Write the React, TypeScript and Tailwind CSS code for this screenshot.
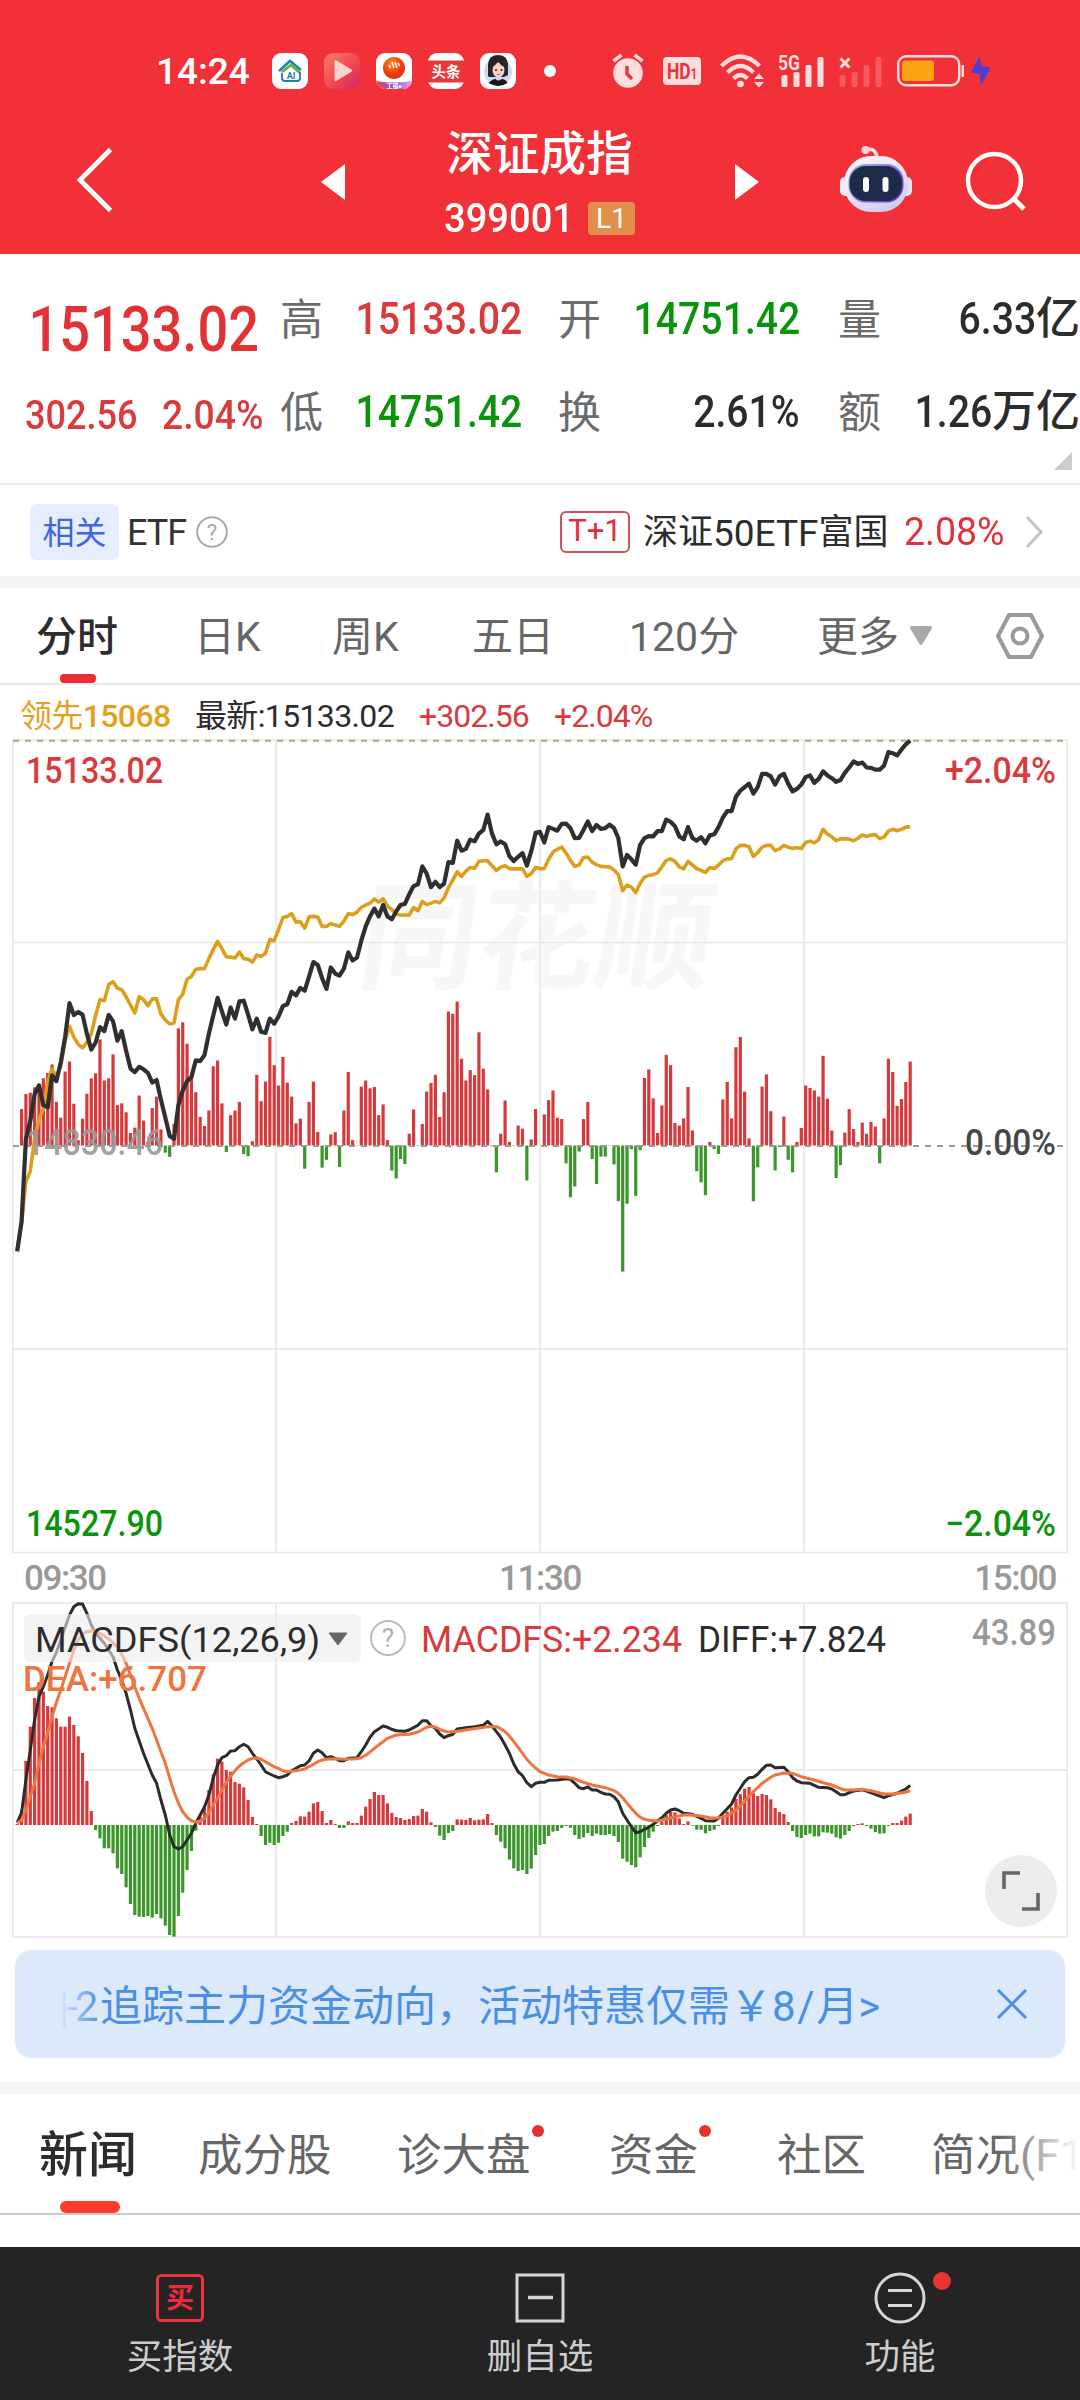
import type { ReactNode } from 'react'

type Point = [number, number]

// One entry per trading minute, 09:30 to 14:24
const priceLine = [
  1460, 1375, 1145, 1095, 1020, 995, 1050, 1057, 967, 983, 930, 860, 765, 798, 790, 797, 850, 895, 875, 832,
  843, 798, 815, 870, 843, 898, 948, 958, 943, 950, 960, 987, 980, 1035, 1085, 1137, 1145, 1050, 1010, 983,
  972, 925, 927, 910, 850, 800, 750, 788, 825, 777, 808, 760, 758, 797, 838, 808, 845, 848, 808, 822,
  802, 773, 768, 733, 743, 722, 730, 690, 650, 658, 695, 725, 665, 682, 688, 668, 623, 645, 637, 590,
  550, 522, 500, 522, 490, 522, 530, 508, 490, 487, 460, 437, 432, 382, 402, 440, 425, 440, 430, 370,
  372, 310, 338, 333, 307, 312, 290, 280, 237, 290, 320, 312, 320, 353, 367, 355, 345, 380, 340, 288,
  285, 315, 272, 277, 282, 263, 262, 275, 303, 302, 280, 256, 283, 266, 277, 275, 265, 275, 303, 382,
  350, 362, 377, 322, 303, 297, 298, 283, 283, 251, 257, 270, 298, 306, 272, 302, 310, 300, 317, 295,
  292, 272, 245, 227, 227, 187, 170, 160, 150, 178, 160, 123, 123, 130, 153, 130, 123, 150, 172, 165,
  153, 132, 127, 148, 137, 116, 127, 135, 145, 140, 120, 105, 88, 95, 91, 105, 106, 111, 111, 100,
  62, 65, 71, 55, 40, 30,
]

const leadLine = [
  1455, 1380, 1265, 1235, 1145, 1090, 1060, 985, 950, 970, 940, 870, 830, 860, 880, 890, 875, 850, 800, 755,
  758, 713, 705, 723, 727, 747, 770, 792, 747, 755, 772, 753, 753, 795, 812, 823, 820, 755, 740, 698,
  690, 670, 668, 668, 640, 615, 592, 612, 635, 636, 638, 622, 640, 642, 650, 630, 634, 625, 587, 590,
  558, 525, 522, 514, 538, 537, 555, 523, 522, 524, 550, 550, 542, 546, 550, 535, 514, 517, 510, 497,
  490, 485, 473, 482, 473, 493, 503, 516, 518, 518, 518, 497, 506, 480, 489, 485, 480, 484, 470, 442,
  420, 397, 410, 395, 385, 387, 368, 366, 366, 380, 393, 384, 380, 388, 389, 389, 389, 410, 402, 385,
  388, 388, 362, 342, 334, 328, 345, 365, 382, 378, 357, 356, 370, 377, 382, 383, 384, 392, 405, 450,
  434, 440, 455, 430, 412, 407, 405, 400, 383, 365, 361, 368, 383, 389, 368, 378, 388, 393, 399, 385,
  388, 378, 366, 361, 360, 333, 323, 323, 327, 354, 343, 328, 323, 323, 338, 333, 323, 328, 332, 329,
  332, 315, 311, 316, 307, 278, 291, 299, 310, 305, 304, 306, 310, 303, 294, 298, 294, 293, 304, 300,
  283, 278, 282, 278, 272, 271,
]

const flowBars = [
  0, 102, 144, 148, 163, 170, 188, 203, 227, 122, 78, 207, 235, 117, 15, 75, 145, 188, 202, 297,
  182, 188, 255, 113, 118, 93, 35, 50, 140, 70, 10, 105, 137, 45, -20, -32, 60, 328, 345, 285,
  195, 149, 80, 55, 98, 222, 238, 118, -18, 85, 98, 122, -24, -30, 12, 198, 124, 179, 304, 225,
  168, 248, 176, 137, 62, 75, -65, 122, 179, 38, -62, -40, 31, 37, -60, 98, 206, 15, -1, 165,
  182, 160, 164, 85, 115, 15, -70, -92, -38, -52, 33, 101, -1, 60, 151, 175, 198, 80, 149, 375,
  369, 403, 243, 182, 211, 197, 317, 215, 157, -2, -75, 33, 126, 10, -1, 56, 47, -98, 17, 102,
  0, 87, 127, 154, 78, 74, -50, -145, -115, -17, 74, 122, -38, -108, -31, -31, -1, -53, -156, -353,
  -163, -10, -141, -13, 189, 213, 132, 35, 112, 254, 225, 63, 56, 76, 164, 42, -72, -103, -139, 10,
  -10, -24, 129, 178, 76, 275, 304, 151, 20, -156, -61, 165, 199, 96, -70, -4, 81, -40, -75, 10,
  49, 168, 161, 154, 137, 251, 131, 42, -91, -55, 36, 102, 46, 10, 64, 33, 66, 53, -50, 76,
  243, 206, 111, 130, 178, 235,
]

const macdBars = [
  3, 45, 192, 295, 381, 428, 400, 357, 353, 320, 295, 295, 325, 300, 266, 216, 132, 42, -15, -40,
  -70, -70, -85, -130, -147, -187, -237, -270, -275, -276, -273, -278, -267, -280, -302, -330, -335, -273, -203, -135,
  -78, -17, 25, 55, 105, 152, 199, 190, 165, 160, 129, 124, 113, 75, 24, 3, -33, -60, -53, -60,
  -53, -33, -20, 6, 12, 26, 25, 40, 65, 69, 42, 6, 15, 3, -9, -9, 11, 6, 6, 28,
  55, 78, 99, 90, 90, 65, 36, 24, 21, 15, 18, 27, 28, 48, 40, 8, -6, -32, -45, -24,
  -18, 17, 16, 15, 21, 14, 16, 17, 33, 6, -30, -50, -70, -104, -130, -138, -135, -147, -131, -90,
  -60, -57, -33, -20, -18, -9, -3, -8, -30, -42, -37, -24, -33, -26, -30, -30, -27, -33, -51, -101,
  -110, -120, -127, -97, -66, -39, -20, -3, 10, 30, 40, 38, 20, 3, 11, -2, -14, -14, -25, -18,
  -14, -3, 27, 40, 53, 78, 93, 109, 114, 95, 87, 93, 90, 77, 51, 39, 33, 9, -18, -36,
  -39, -30, -26, -34, -34, -22, -23, -26, -37, -41, -30, -18, -3, 3, 5, -3, -11, -21, -26, -25,
  -3, 6, 6, 13, 25, 34,
]

const diffLine: Point[] = [
  [0, 998], [1, 968], [2, 870], [3, 780], [4, 690], [5, 620], [6, 590], [7, 555], [8, 515], [9, 487], [10, 450],
  [11, 412], [12, 375], [13, 350], [14, 341], [15, 342], [16, 370], [17, 405], [18, 430], [20, 460], [22, 500],
  [23, 540], [24, 570], [25, 610], [26, 660], [27, 715], [29, 790], [31, 855], [32, 880], [33, 930], [34, 975],
  [35, 1035], [36, 1070], [37, 1077], [38, 1070], [39, 1050], [40, 1030], [41, 1000], [42, 975], [43, 950],
  [44, 915], [45, 865], [46, 825], [47, 803], [48, 797], [49, 783], [50, 782], [51, 770], [52, 763], [53, 770],
  [54, 790], [55, 807], [56, 825], [57, 845], [58, 852], [59, 858], [60, 863], [61, 860], [62, 855], [63, 842],
  [64, 835], [65, 827], [66, 825], [67, 812], [68, 790], [69, 780], [70, 788], [71, 803], [72, 800], [73, 805],
  [74, 812], [75, 812], [76, 805], [78, 803], [79, 785], [80, 765], [81, 742], [82, 725], [83, 717], [84, 708],
  [85, 712], [86, 718], [87, 722], [89, 724], [90, 720], [91, 713], [92, 706], [93, 692], [94, 692], [95, 707],
  [96, 715], [97, 732], [98, 743], [99, 737], [100, 733], [101, 717], [103, 713], [105, 710], [107, 706],
  [108, 694], [109, 708], [110, 725], [111, 742], [112, 765], [113, 790], [114, 822], [115, 845], [116, 857],
  [117, 878], [118, 890], [119, 880], [120, 877], [121, 877], [122, 871], [124, 870], [126, 866], [127, 868],
  [128, 880], [129, 893], [130, 896], [131, 891], [132, 900], [133, 900], [134, 907], [135, 912], [136, 913],
  [137, 920], [138, 935], [139, 970], [140, 990], [141, 1010], [142, 1028], [143, 1025], [144, 1018],
  [145, 1012], [146, 1003], [147, 993], [148, 983], [149, 970], [150, 960], [151, 957], [152, 962], [153, 970],
  [155, 973], [157, 985], [158, 992], [160, 993], [161, 985], [162, 970], [164, 942], [165, 915], [166, 895],
  [167, 875], [168, 863], [169, 862], [170, 853], [171, 838], [172, 826], [173, 825], [174, 833], [176, 832],
  [177, 845], [178, 863], [179, 873], [180, 878], [182, 880], [184, 892], [186, 893], [187, 897], [188, 905],
  [189, 914], [190, 914], [191, 908], [192, 903], [194, 899], [195, 903], [197, 913], [199, 923], [200, 917],
  [202, 910], [203, 903], [204, 897], [205, 886],
]

const deaLine: Point[] = [
  [0, 1000], [1, 990], [2, 960], [3, 920], [4, 880], [5, 820], [6, 770], [7, 728], [8, 680], [9, 637], [10, 600],
  [11, 560], [12, 520], [13, 480], [14, 450], [15, 432], [16, 425], [17, 423], [18, 424], [19, 430], [20, 438],
  [21, 447], [22, 458], [23, 472], [24, 492], [25, 520], [26, 555], [27, 590], [28, 625], [29, 655], [30, 685],
  [31, 715], [32, 750], [33, 785], [34, 820], [35, 865], [36, 905], [37, 940], [38, 965], [39, 982], [40, 992],
  [41, 996], [42, 993], [43, 985], [44, 967], [45, 945], [46, 925], [47, 900], [48, 877], [49, 858], [50, 842],
  [51, 828], [52, 818], [53, 810], [54, 805], [55, 804], [56, 808], [57, 815], [59, 830], [61, 842], [62, 845],
  [63, 844], [65, 840], [66, 837], [67, 830], [69, 815], [70, 810], [71, 808], [73, 806], [75, 808], [78, 806],
  [79, 803], [80, 796], [82, 775], [84, 755], [85, 745], [87, 735], [90, 733], [92, 726], [94, 712], [95, 709],
  [96, 711], [97, 718], [98, 723], [99, 726], [101, 724], [104, 718], [106, 714], [108, 710], [110, 710],
  [111, 716], [112, 725], [113, 738], [114, 755], [115, 772], [116, 790], [117, 808], [118, 822], [119, 834],
  [120, 845], [122, 855], [124, 860], [126, 861], [128, 867], [130, 877], [132, 885], [135, 893], [137, 902],
  [138, 910], [139, 923], [140, 940], [141, 955], [142, 970], [143, 981], [144, 988], [145, 991], [147, 993],
  [149, 988], [151, 980], [153, 975], [154, 974], [157, 978], [159, 983], [161, 984], [163, 978], [164, 970],
  [165, 960], [166, 947], [167, 933], [169, 905], [171, 880], [173, 862], [174, 855], [176, 849], [178, 850],
  [180, 860], [183, 870], [185, 878], [187, 885], [189, 896], [190, 900], [192, 900], [194, 898], [196, 902],
  [199, 912], [201, 912], [204, 907], [205, 902],
]

const minuteX = (i: number) => 17.2 + i * 4.356
const priceY = (v: number) => v / 2.8
const macdY = (v: number) => v / 3 - 112

const minuteLine = (values: number[]) =>
  values.map((v, i) => `${minuteX(i).toFixed(1)},${priceY(v).toFixed(1)}`).join(' ')
const macdLine = (points: Point[]) =>
  points.map(([i, v]) => `${minuteX(i).toFixed(1)},${macdY(v).toFixed(1)}`).join(' ')

const RED = '#d5393c'
const GREEN = '#3a9729'

function Bars({ values, base, unit }: { values: number[]; base: number; unit: number }) {
  return (
    <g>
      {values.map((v, i) => {
        const h = Math.abs(v) / unit
        return (
          <rect
            key={i}
            x={minuteX(i) - 1.6}
            y={v > 0 ? base - h : base}
            width={3.2}
            height={h}
            fill={v > 0 ? RED : GREEN}
          />
        )
      })}
    </g>
  )
}

function Label({ x, y, w, size = 36, fill, end, light, children }: {
  x: number
  y: number
  w: number
  size?: number
  fill: string
  end?: boolean
  light?: boolean
  children: string
}) {
  return (
    <text
      x={end ? x - w : x}
      y={y}
      fontSize={size}
      textLength={w}
      lengthAdjust="spacingAndGlyphs"
      fill={fill}
      className={light ? 'font-normal' : 'font-medium'}
    >
      {children}
    </text>
  )
}

function StatusBar() {
  return (
    <div className="flex h-[142px] items-center pl-[156px]">
      <span className="w-[116px] text-[37px] leading-none font-medium">14:24</span>
      <div className="flex gap-4">
        <svg width="36" height="36" viewBox="0 0 36 36">
          <rect width="36" height="36" rx="9" fill="#fff" />
          <path d="M7 18 18 8l11 9" fill="none" stroke="#1f7fc4" strokeWidth="2.6" />
          <path d="M10 19l9-7 9 8" fill="none" stroke="#63b32e" strokeWidth="2.6" />
          <path d="M10 20v5q0 3 3 3h12q3 0 3-3v-6" fill="none" stroke="#1d7bb8" strokeWidth="1.8" />
          <text x="19" y="26" fontSize="9" fontWeight="700" textAnchor="middle" fill="#1d7bb8">AI</text>
        </svg>
        <svg width="36" height="36" viewBox="0 0 36 36">
          <defs>
            <linearGradient id="play" x1="0" y1="0" x2="1" y2="1">
              <stop offset="0" stopColor="#fb7f63" />
              <stop offset="0.6" stopColor="#ee4350" />
              <stop offset="1" stopColor="#cf2a6b" />
            </linearGradient>
          </defs>
          <rect width="36" height="36" rx="9" fill="url(#play)" />
          <path d="M10.500 8.500q0-2 2-1l15 9q1.500 1 0 2.200l-15 9q-2 1-2-1z" fill="#ffd3cd" />
        </svg>
        <svg width="36" height="36" viewBox="0 0 36 36">
          <defs>
            <linearGradient id="ribbon">
              <stop offset="0" stopColor="#f4453c" />
              <stop offset="0.55" stopColor="#7b5cf0" />
              <stop offset="1" stopColor="#f2a0d8" />
            </linearGradient>
            <radialGradient id="ball" cx="0.4" cy="0.3">
              <stop offset="0" stopColor="#ff8a1f" />
              <stop offset="1" stopColor="#e8380d" />
            </radialGradient>
            <clipPath id="ballClip"><rect width="36" height="36" rx="9" /></clipPath>
          </defs>
          <g clipPath="url(#ballClip)">
            <rect width="36" height="36" fill="#fff" />
            <circle cx="18" cy="15" r="11" fill="url(#ball)" />
            <path d="M13 12l1.500 3M16 9l2 6M19 9l2 6M22 10l1.500 3" stroke="#fff" strokeWidth="1.400" />
            <path d="M0 28q18 3 36 0v8H0z" fill="url(#ribbon)" />
            <text x="18" y="34.500" fontSize="6" fontWeight="700" textAnchor="middle" fill="#fff">工银e</text>
          </g>
        </svg>
        <svg width="36" height="36" viewBox="0 0 36 36">
          <rect width="36" height="36" rx="9" fill="#fff" />
          <rect y="7.500" width="36" height="22" fill="#e9373c" />
          <text x="18" y="24" fontSize="14.500" fontWeight="700" textAnchor="middle" fill="#fff">头条</text>
        </svg>
        <svg width="36" height="36" viewBox="0 0 36 36">
          <rect width="36" height="36" rx="9" fill="#fff" />
          <circle cx="18" cy="18.500" r="14" fill="#c9dcf3" />
          <path d="M8 23V11Q9 2 18 2t10 9v11l-4 2H9z" fill="#2b2324" />
          <ellipse cx="18.500" cy="17" rx="6" ry="7.500" fill="#f6d3c3" />
          <path d="M12 14q5-2 6-7 2 6 7 7V8l-6-4-6 3z" fill="#2b2324" />
          <circle cx="16" cy="17" r="1" fill="#2b2324" />
          <circle cx="21.500" cy="17" r="1" fill="#2b2324" />
          <path d="M17 21.500h3" stroke="#d55" strokeWidth="1" />
          <path d="M8.500 30q4-4 7-4 3 3 6 0 4 0 6 4-9 6-19 0z" fill="#15151a" />
        </svg>
      </div>
      <span className="ml-7 h-3 w-3 rounded-full bg-white" />
      <svg className="ml-14" width="32" height="36" viewBox="0 0 32 36">
        <circle cx="16" cy="20" r="14.800" fill="#ffdcdd" />
        <path d="M1.500 8l8-6M30.500 8l-8-6" stroke="#ffdcdd" strokeWidth="3.500" />
        <path d="M15 13v8l5 5" fill="none" stroke="#e9383f" strokeWidth="3.500" />
      </svg>
      <svg className="ml-[19px]" width="38" height="30" viewBox="0 0 38 30">
        <rect y="1" width="38" height="28" rx="4" fill="#ffdcdd" />
        <text x="4" y="22.500" fontSize="22" fontWeight="700" textLength="30" lengthAdjust="spacingAndGlyphs" fill="#e3363c">
          HD<tspan fontSize="14">1</tspan>
        </text>
      </svg>
      <svg className="ml-[19px]" width="46" height="36" viewBox="0 0 46 36">
        <g fill="none" stroke="#ffdcdd" strokeWidth="4.200">
          <path d="M1.500 13q19-19 38 0" />
          <path d="M7.500 19.500q13-13 26 0" />
          <path d="M13.500 25.500q7-7 14 0" />
        </g>
        <circle cx="20.500" cy="31" r="3.300" fill="#ffdcdd" />
        <path d="M34 26l5-5.500 5 5.500zM34 29h10l-5 5.500z" fill="#ffdcdd" />
      </svg>
      <svg className="ml-3" width="48" height="36" viewBox="0 0 48 36">
        <text x="0" y="17" fontSize="20.500" fontWeight="700" textLength="22" lengthAdjust="spacingAndGlyphs" fill="#ffdcdd">5G</text>
        <g fill="#ffdcdd">
          <rect x="3.500" y="22" width="6" height="12" rx="1.500" />
          <rect x="15.500" y="19" width="6" height="15" rx="1.500" />
          <rect x="27.500" y="12" width="6" height="22" rx="1.500" />
          <rect x="39.500" y="4" width="6" height="30" rx="1.500" />
        </g>
      </svg>
      <svg className="ml-[13px]" width="46" height="36" viewBox="0 0 46 36">
        <path d="M1.500 5.500l9 9M10.500 5.500l-9 9" stroke="#ffdcdd" strokeWidth="3" />
        <g fill="#f6595f">
          <rect x="0.500" y="22" width="6" height="12" rx="2" />
          <rect x="12.500" y="19" width="6" height="15" rx="2" />
          <rect x="24.500" y="12" width="6" height="22" rx="2" />
          <rect x="36.500" y="4" width="6" height="30" rx="2" />
        </g>
      </svg>
      <svg className="ml-3" width="68" height="32" viewBox="0 0 68 32">
        <rect x="1.200" y="1.200" width="61" height="29" rx="8" fill="none" stroke="#ffdcdd" strokeWidth="2.400" />
        <rect x="5" y="5.500" width="32" height="20.500" rx="3.500" fill="#fca514" />
        <rect x="64.500" y="10" width="2.500" height="12" rx="1" fill="#ffdcdd" />
      </svg>
      <svg className="ml-1.5" width="20" height="32" viewBox="0 0 20 32">
        <path d="M8.500 1 0 17.500l8.500 1.500 1.500 11.500L19.500 12.500 10.500 11z" fill="#4a3fd0" />
      </svg>
    </div>
  )
}

function NavBar() {
  return (
    <div className="flex h-[112px] pl-[76px]">
      <svg className="mt-1" width="38" height="70" viewBox="0 0 38 70">
        <path d="M34.500 3.500 4 34 34.500 64.500" fill="none" stroke="#fff" strokeWidth="4.800" />
      </svg>
      <svg className="mt-[22px] ml-[207px]" width="24" height="36" viewBox="0 0 24 36">
        <path d="M24 0v36L0 18z" fill="#fff" />
      </svg>
      <div className="ml-[99px] w-[191px] -mt-[13px] whitespace-nowrap">
        <div className="text-center text-[46.5px] leading-[50px] font-medium">深证成指</div>
        <div className="mt-[23px] flex h-[33px] items-center">
          <span className="w-[144px] text-[41px] leading-none font-medium"><span className="inline-block origin-left scale-x-[0.93]">399001</span></span>
          <span className="flex h-[33px] w-[47px] items-center justify-center rounded-[4px] bg-[#e0904b] text-[28px]">L1</span>
        </div>
      </div>
      <svg className="mt-[22px] ml-[100px]" width="24" height="36" viewBox="0 0 24 36">
        <path d="M0 0v36l24-18z" fill="#fff" />
      </svg>
      <svg className="mt-[3px] ml-[81px]" width="72" height="68" viewBox="0 0 72 68">
        <defs>
          <linearGradient id="shell" x1="0" y1="0" x2="0.600" y2="1">
            <stop offset="0" stopColor="#fdf8fb" />
            <stop offset="0.600" stopColor="#e9e2f8" />
            <stop offset="1" stopColor="#cfcdf2" />
          </linearGradient>
          <linearGradient id="visor" x1="0" y1="0" x2="1" y2="0.800">
            <stop offset="0" stopColor="#8cc6d6" />
            <stop offset="0.600" stopColor="#8f6be6" />
            <stop offset="1" stopColor="#5a35b8" />
          </linearGradient>
        </defs>
        <path d="M25 5q11-3 12 8" fill="none" stroke="#f3dfe8" strokeWidth="3.500" />
        <circle cx="25.500" cy="5" r="4" fill="#f6d5dd" />
        <rect x="0" y="32" width="12" height="19" rx="5" fill="#f1ebf8" />
        <rect x="60" y="32" width="12" height="19" rx="5" fill="#e6e0f6" />
        <rect x="4" y="11" width="64" height="56" rx="27" fill="url(#shell)" />
        <rect x="8.500" y="19" width="55" height="38.500" rx="17" fill="url(#visor)" />
        <rect x="9.500" y="21" width="52.500" height="35" rx="16" fill="#1d2a49" />
        <rect x="23" y="32" width="6" height="15" rx="3" fill="#fff" />
        <rect x="42.500" y="32" width="6" height="15" rx="3" fill="#fff" />
      </svg>
      <svg className="mt-[9px] ml-[53px]" width="62" height="62" viewBox="0 0 62 62">
        <circle cx="29.500" cy="29.500" r="26.500" fill="none" stroke="#fff" strokeWidth="4.500" />
        <path d="M47.500 46.500l11.500 11.500" stroke="#fff" strokeWidth="5" />
      </svg>
    </div>
  )
}

function Quote({ label, children, color }: { label: string; children: ReactNode; color: string }) {
  return (
    <div className="flex items-center justify-between whitespace-nowrap">
      <span className="mt-[3px] text-[43px] text-[#6b6b6b]">{label}</span>
      <span className={`flex items-center text-[44px] font-medium ${color}`}>{children}</span>
    </div>
  )
}

const num = 'inline-block origin-right scale-x-[0.89]'

function QuotePanel() {
  return (
    <section className="relative h-[231px] border-b-2 border-[#ececec] pt-[18px]">
      <div className="grid h-[93px] grid-cols-[280px_242px_36px_242px_38px_242px] items-center leading-none">
        <span className="mt-[21px] origin-left scale-x-[0.86] pl-[33px] text-[63px] font-medium text-[#e23236]">15133.02</span>
        <Quote label="高" color="text-[#d93a3d]"><span className={num}>15133.02</span></Quote>
        <span />
        <Quote label="开" color="text-[#0b930d]"><span className={num}>14751.42</span></Quote>
        <span />
        <Quote label="量" color="text-[#2c2c2c]"><span className={num}>6.33</span><span>亿</span></Quote>
      </div>
      <div className="grid h-[93px] grid-cols-[280px_242px_36px_242px_38px_242px] items-center leading-none">
        <div className="mt-[7px] flex pl-[25px] text-[41px] font-medium text-[#d93a3d]">
          <span className="w-[137px] origin-left scale-x-[0.88]">302.56</span>
          <span className="origin-left scale-x-[0.91]">2.04%</span>
        </div>
        <Quote label="低" color="text-[#0b930d]"><span className={num}>14751.42</span></Quote>
        <span />
        <Quote label="换" color="text-[#2c2c2c]"><span className={num}>2.61%</span></Quote>
        <span />
        <Quote label="额" color="text-[#2c2c2c]"><span className={num}>1.26</span><span>万亿</span></Quote>
      </div>
      <svg className="absolute right-[8px] bottom-[13px]" width="18" height="18">
        <path d="M18 0v18H0z" fill="#ccc" />
      </svg>
    </section>
  )
}

function RelatedRow() {
  return (
    <section className="flex h-[91px] items-center pt-[2px] pl-[30px] whitespace-nowrap">
      <span className="flex h-14 w-[89px] items-center justify-center rounded-md bg-[#e6edfc] pt-0.5 text-[32px] text-[#3e66dd]">相关</span>
      <span className="mt-0.5 ml-2 w-[69px] text-[36px] tracking-[-0.03em] text-[#333]">ETF</span>
      <svg width="32" height="32" viewBox="0 0 32 32">
        <circle cx="16" cy="16" r="14.800" fill="none" stroke="#aaa" strokeWidth="2" />
        <text x="16" y="24" fontSize="22" textAnchor="middle" fill="#aaa">?</text>
      </svg>
      <span className="ml-[332px] flex h-[42px] w-[70px] items-center justify-center rounded-md border-2 border-[#d2505b] text-[31px] text-[#e0303d]">T+1</span>
      <span className="mt-1 ml-[13px] flex w-[261px] items-center text-[35px] text-[#2c2c2c]">
        深证<span className="text-[37px]">50ETF</span>富国
      </span>
      <span className="mt-0.5 w-[121px] origin-left scale-x-[0.96] text-[39px] text-[#e0303d]">2.08%</span>
      <svg width="19" height="34" viewBox="0 0 19 34">
        <path d="M2 2l14 15L2 32" fill="none" stroke="#c4c4c4" strokeWidth="3" />
      </svg>
    </section>
  )
}

function PeriodTabs() {
  return (
    <nav className="relative flex h-[97px] items-center border-b-2 border-[#e8e8e8] pl-[36px] text-[41px] whitespace-nowrap text-[#666]">
      <span className="mt-1 w-[158px] font-medium text-[#2c2c2c]">分时</span>
      <span className="mt-1 w-[138px]">日K</span>
      <span className="mt-1 w-[140px]">周K</span>
      <span className="mt-1 w-[157px]">五日</span>
      <span className="mt-1 w-[188px]">120分</span>
      <span className="mt-1 w-[92px]">更多</span>
      <svg width="24" height="20" viewBox="0 0 24 20">
        <path d="M3 0h18q3 0 1.500 3l-9 15q-1.500 2-3 0l-9-15Q0 0 3 0z" fill="#a8a8a8" />
      </svg>
      <svg className="ml-[62px]" width="50" height="48" viewBox="0 0 50 48">
        <path d="M14 3h22l11 21-11 21H14L3 24z" fill="none" stroke="#999" strokeWidth="4" strokeLinejoin="round" />
        <circle cx="25" cy="24" r="7.500" fill="none" stroke="#999" strokeWidth="4" />
      </svg>
      <span className="absolute bottom-0 left-[60px] h-[9px] w-9 rounded-[4px] bg-[#e92f30]" />
    </nav>
  )
}

function PriceChart() {
  return (
    <svg className="block" width="1080" height="826" viewBox="0 0 1080 826">
      <text x="358" y="250" fontSize="118" fontWeight="700" fill="#f7f7f7" transform="skewX(-8) translate(32 0)">同花顺</text>
      <g stroke="#e6e6e6" strokeWidth="1.500" fill="none">
        <rect x="13" y="10" width="1054" height="812.500" />
        <path d="M13 212.500h1054M13 619h1054M276 10v812M540 10v812M804 10v812" />
      </g>
      <path d="M13 10.800h1054" stroke="#b9a271" strokeWidth="2" strokeDasharray="6 6" />
      <Bars values={flowBars} base={415.5} unit={2.8} />
      <path d="M13 416h1054" stroke="#9a9a9a" strokeWidth="1.800" strokeDasharray="6 6" />
      <Label x={26} y={52.5} w={137} fill="#d93a3d">15133.02</Label>
      <Label x={1056} y={52.5} w={111} fill="#d93a3d" end>+2.04%</Label>
      <Label x={1056} y={424.5} w={91} fill="#474747" end>0.00%</Label>
      <Label x={26} y={806} w={137} fill="#0b930d">14527.90</Label>
      <Label x={1056} y={806} w={111} fill="#0b930d" end>−2.04%</Label>
      <polyline points={minuteLine(leadLine)} fill="none" stroke="#dc9f1c" strokeWidth="3.600" strokeLinejoin="round" />
      <g opacity="0.9"><Label x={26} y={424.5} w={137} fill="#999">14830.46</Label></g>
      <polyline points={minuteLine(priceLine)} fill="none" stroke="#2f2f2f" strokeWidth="4.200" strokeLinejoin="round" />
    </svg>
  )
}

function MacdChart() {
  return (
    <svg className="block" width="1080" height="336" viewBox="0 0 1080 336">
      <g stroke="#e6e6e6" strokeWidth="1.500" fill="none">
        <rect x="13" y="1" width="1054" height="334" />
        <path d="M13 168h1054M276 1v334M540 1v334M804 1v334" />
      </g>
      <Bars values={macdBars} base={223} unit={3} />
      <polyline points={macdLine(diffLine)} fill="none" stroke="#2c2c2c" strokeWidth="3" strokeLinejoin="round" />
      <polyline points={macdLine(deaLine)} fill="none" stroke="#ee7440" strokeWidth="3" strokeLinejoin="round" />
      <rect x="24" y="12" width="337" height="48" rx="6" fill="#ececec" fillOpacity="0.6" />
      <Label x={35} y={50} w={285} size={35} fill="#2c2c2c" light>MACDFS(12,26,9)</Label>
      <path d="M329 31h18l-9 12z" fill="#666" stroke="#666" strokeWidth="1" />
      <circle cx="388" cy="36" r="17" fill="none" stroke="#bbb" strokeWidth="2" />
      <text x="388" y="45" fontSize="26" textAnchor="middle" fill="#b0b0b0">?</text>
      <Label x={421} y={49.5} w={261} size={36} fill="#d93a3d" light>MACDFS:+2.234</Label>
      <Label x={698} y={49.5} w={188} size={36} fill="#2c2c2c" light>DIFF:+7.824</Label>
      <Label x={1056} y={43} w={84} fill="#999" end>43.89</Label>
      <Label x={23} y={89} w={184} size={35} fill="#ee7440">DEA:+6.707</Label>
      <circle cx="1021" cy="289" r="36" fill="#ececec" />
      <path d="M1004 287v-16h16M1038 291v16h-16" fill="none" stroke="#666" strokeWidth="3.600" />
    </svg>
  )
}

function PromoBanner() {
  return (
    <div className="mx-[15px] mt-3 flex h-[108px] items-center rounded-[16px] bg-[#dbe9fb] pl-[44px] text-[42px] whitespace-nowrap text-[#4a90e2]">
      <span className="mt-[5px] flex w-[937px] shrink-0">
        <span className="w-[41px] shrink-0 bg-gradient-to-r from-[#dbe9fb] to-[#4a90e2] bg-clip-text tracking-[-0.07em] text-transparent">|-2</span>
        <span>追踪主力资金动向，活动特惠仅需￥</span>
        <span className="tracking-[0.04em]">8/</span>
        <span>月&gt;</span>
      </span>
      <svg className="shrink-0" width="32" height="32" viewBox="0 0 32 32">
        <path d="M2 2l28 28M30 2L2 30" stroke="#4a90e2" strokeWidth="3" />
      </svg>
    </div>
  )
}

function NewsTabs() {
  return (
    <nav className="relative flex h-[121px] items-center overflow-hidden border-b-2 border-[#c9c9c9] pt-[5px] pl-[39px] text-[44.5px] whitespace-nowrap text-[#666]">
      <span className="w-[159px] shrink-0 text-[49px] font-medium text-[#2c2c2c]">新闻</span>
      <span className="w-[199px] shrink-0">成分股</span>
      <span className="relative w-[212px] shrink-0">
        诊大盘
        <span className="absolute top-0.5 left-[135px] h-3 w-3 rounded-full bg-[#e13332]" />
      </span>
      <span className="relative w-[168px] shrink-0">
        资金
        <span className="absolute top-0.5 left-[90px] h-3 w-3 rounded-full bg-[#e13332]" />
      </span>
      <span className="w-[154px] shrink-0">社区</span>
      <span className="shrink-0">简况(F10)</span>
      <span className="absolute inset-y-0 right-0 w-20 bg-gradient-to-r from-transparent to-white" />
      <span className="absolute bottom-0 left-[60px] h-3 w-[60px] rounded-[6px] bg-[#fb3a30]" />
    </nav>
  )
}

function BottomBar() {
  return (
    <footer className="grid h-[153px] grid-cols-3 bg-[#242424] pt-[25px] text-[35.5px] leading-[44px] text-[#cdcdcd]">
      <div className="flex flex-col items-center">
        <svg width="52" height="52" viewBox="0 0 52 52">
          <rect x="3.500" y="3.500" width="45" height="45" rx="4" fill="none" stroke="#ea3541" strokeWidth="3" />
          <text x="26" y="36" fontSize="28" fontWeight="700" textAnchor="middle" fill="#ee2b3c">买</text>
        </svg>
        <span className="mt-[11px]">买指数</span>
      </div>
      <div className="flex flex-col items-center">
        <svg width="52" height="52" viewBox="0 0 52 52">
          <rect x="3" y="3" width="46" height="46" fill="none" stroke="#d6d6d6" strokeWidth="3" />
          <path d="M14 25.500h25" stroke="#d6d6d6" strokeWidth="3.500" />
        </svg>
        <span className="mt-[11px]">删自选</span>
      </div>
      <div className="relative flex flex-col items-center">
        <svg width="52" height="52" viewBox="0 0 52 52">
          <circle cx="26" cy="26" r="24" fill="none" stroke="#d6d6d6" strokeWidth="3" />
          <path d="M14 18.500h24M14 33.500h24" stroke="#d6d6d6" strokeWidth="3" />
        </svg>
        <span className="mt-[11px]">功能</span>
        <span className="absolute top-0 left-[213px] h-[18px] w-[18px] rounded-full bg-[#ea3332]" />
      </div>
    </footer>
  )
}

export default function App() {
  return (
    <div className="flex h-[2400px] w-[1080px] flex-col overflow-hidden bg-white font-[Roboto,'Noto_Sans_CJK_SC',sans-serif]">
      <header className="h-[254px] bg-[#f23038] text-white">
        <StatusBar />
        <NavBar />
      </header>
      <QuotePanel />
      <RelatedRow />
      <div className="h-3 bg-[#f4f4f4]" />
      <PeriodTabs />
      <div className="flex h-[46px] items-center pt-[16px] pl-[20px] text-[32px] leading-none whitespace-nowrap text-[#2c2c2c]">
        <span className="w-[175px] tracking-[-0.02em] text-[#e3a01b]">领先<span className="font-medium">15068</span></span>
        <span className="w-[224px] tracking-[-0.02em]">最新:15133.02</span>
        <span className="w-[135px] tracking-[-0.03em] text-[#d93a3d]">+302.56</span>
        <span className="tracking-[-0.03em] text-[#d93a3d]">+2.04%</span>
      </div>
      <div className="-mt-px">
        <PriceChart />
      </div>
      <div className="flex h-[46px] items-center justify-between pt-px pr-[24px] pl-[24px] text-[35px] font-medium tracking-[-0.04em] text-[#999]">
        <span>09:30</span>
        <span>11:30</span>
        <span>15:00</span>
      </div>
      <MacdChart />
      <PromoBanner />
      <div className="mt-6 h-3 bg-[#f4f4f4]" />
      <NewsTabs />
      <div className="grow" />
      <BottomBar />
    </div>
  )
}
